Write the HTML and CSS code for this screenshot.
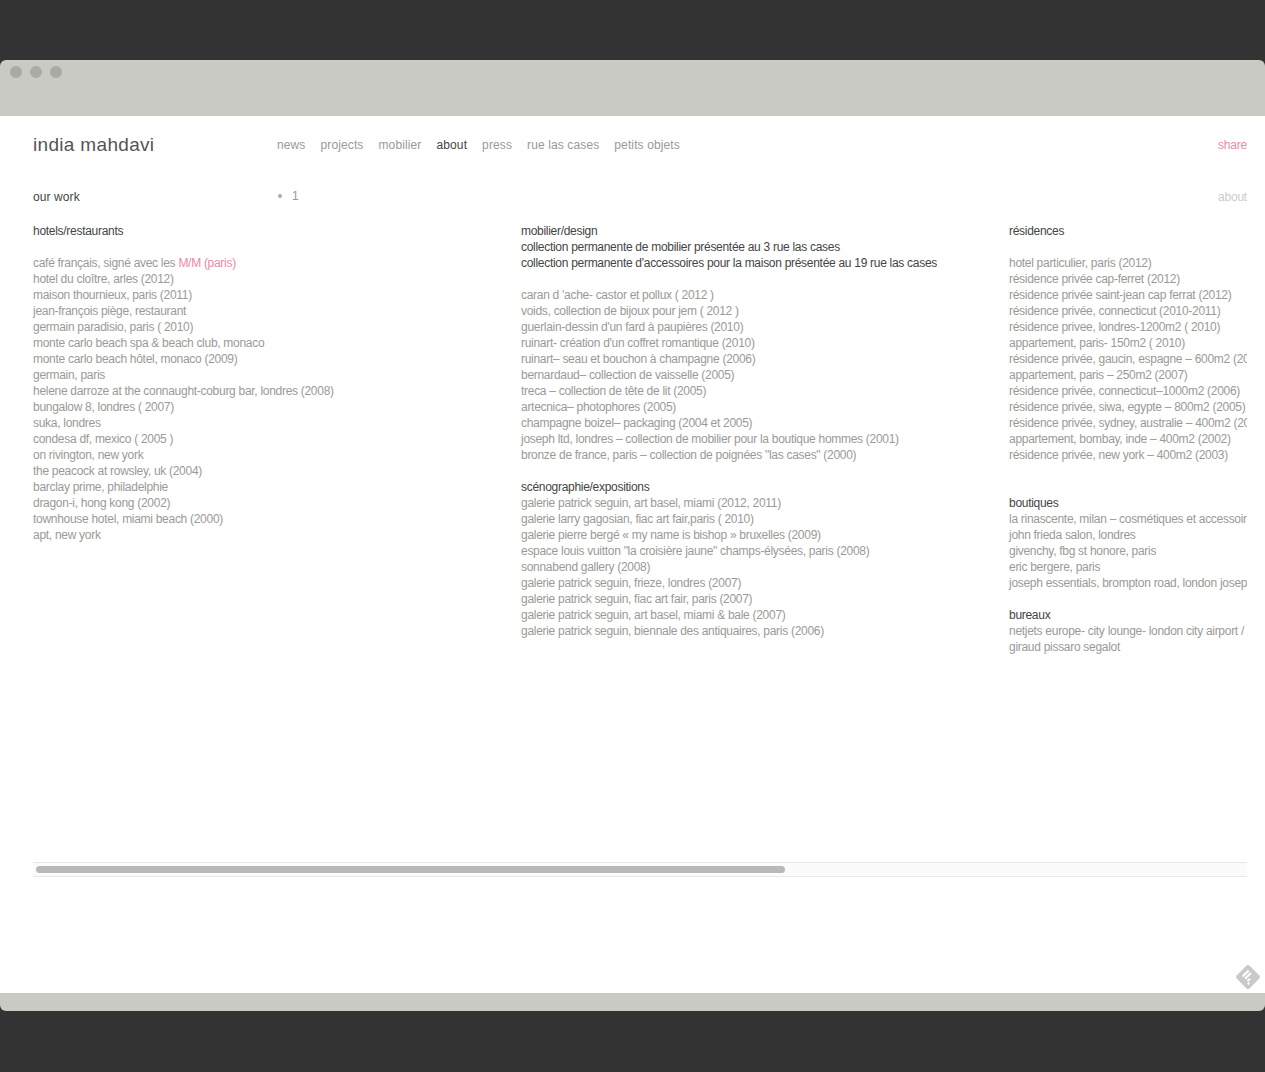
FILE: index.html
```html
<!DOCTYPE html>
<html lang="en">
<head>
    <meta charset="UTF-8">
    <title>india mahdavi</title>
    <link rel="stylesheet" href="styles.css">
</head>
<body>
    <div class="window">
        <div class="titlebar">
            <span class="dot"></span>
            <span class="dot"></span>
            <span class="dot"></span>
        </div>
        <div class="page">
            <header class="top">
                <a class="logo">india mahdavi</a>
                <nav class="nav">
                    <a>news</a>
                    <a>projects</a>
                    <a>mobilier</a>
                    <a class="current">about</a>
                    <a>press</a>
                    <a>rue las cases</a>
                    <a>petits objets</a>
                </nav>
                <a class="share">share</a>
            </header>
            <div class="sub">
                <div class="sub-title">our work</div>
                <ul class="pager"><li>1</li></ul>
                <a class="sub-about">about</a>
            </div>
            <div class="scroller">
                <div class="columns">
                    <div class="col">
                        <h3>hotels/restaurants</h3>
                        <ul class="gap">
                            <li>café français, signé avec les <a class="pink">M/M (paris)</a></li>
                            <li>hotel du cloître, arles (2012)</li>
                            <li>maison thournieux, paris (2011)</li>
                            <li>jean-françois piège, restaurant</li>
                            <li>germain paradisio, paris ( 2010)</li>
                            <li>monte carlo beach spa &amp; beach club, monaco</li>
                            <li>monte carlo beach hôtel, monaco (2009)</li>
                            <li>germain, paris</li>
                            <li>helene darroze at the connaught-coburg bar, londres (2008)</li>
                            <li>bungalow 8, londres ( 2007)</li>
                            <li>suka, londres</li>
                            <li>condesa df, mexico ( 2005 )</li>
                            <li>on rivington, new york</li>
                            <li>the peacock at rowsley, uk (2004)</li>
                            <li>barclay prime, philadelphie</li>
                            <li>dragon-i, hong kong (2002)</li>
                            <li>townhouse hotel, miami beach (2000)</li>
                            <li>apt, new york</li>
                        </ul>
                    </div>
                    <div class="col">
                        <h3>mobilier/design</h3>
                        <h3>collection permanente de mobilier présentée au 3 rue las cases</h3>
                        <h3>collection permanente d'accessoires pour la maison présentée au 19 rue las cases</h3>
                        <ul class="gap">
                            <li>caran d 'ache- castor et pollux ( 2012 )</li>
                            <li>voids, collection de bijoux pour jem ( 2012 )</li>
                            <li>guerlain-dessin d'un fard à paupières (2010)</li>
                            <li>ruinart- création d'un coffret romantique (2010)</li>
                            <li>ruinart– seau et bouchon à champagne (2006)</li>
                            <li>bernardaud– collection de vaisselle (2005)</li>
                            <li>treca – collection de tête de lit (2005)</li>
                            <li>artecnica– photophores (2005)</li>
                            <li>champagne boizel– packaging (2004 et 2005)</li>
                            <li>joseph ltd, londres – collection de mobilier pour la boutique hommes (2001)</li>
                            <li>bronze de france, paris – collection de poignées "las cases" (2000)</li>
                        </ul>
                        <h3 class="gap">scénographie/expositions</h3>
                        <ul>
                            <li>galerie patrick seguin, art basel, miami (2012, 2011)</li>
                            <li>galerie larry gagosian, fiac art fair,paris ( 2010)</li>
                            <li>galerie pierre bergé « my name is bishop » bruxelles (2009)</li>
                            <li>espace louis vuitton "la croisière jaune" champs-élysées, paris (2008)</li>
                            <li>sonnabend gallery (2008)</li>
                            <li>galerie patrick seguin, frieze, londres (2007)</li>
                            <li>galerie patrick seguin, fiac art fair, paris (2007)</li>
                            <li>galerie patrick seguin, art basel, miami &amp; bale (2007)</li>
                            <li>galerie patrick seguin, biennale des antiquaires, paris (2006)</li>
                        </ul>
                    </div>
                    <div class="col">
                        <h3>résidences</h3>
                        <ul class="gap">
                            <li>hotel particulier, paris (2012)</li>
                            <li>résidence privée cap-ferret (2012)</li>
                            <li>résidence privée saint-jean cap ferrat (2012)</li>
                            <li>résidence privée, connecticut (2010-2011)</li>
                            <li>résidence privee, londres-1200m2 ( 2010)</li>
                            <li>appartement, paris- 150m2 ( 2010)</li>
                            <li>résidence privée, gaucin, espagne – 600m2 (2008)</li>
                            <li>appartement, paris – 250m2 (2007)</li>
                            <li>résidence privée, connecticut–1000m2 (2006)</li>
                            <li>résidence privée, siwa, egypte – 800m2 (2005)</li>
                            <li>résidence privée, sydney, australie – 400m2 (2004)</li>
                            <li>appartement, bombay, inde – 400m2 (2002)</li>
                            <li>résidence privée, new york – 400m2 (2003)</li>
                        </ul>
                        <h3 class="gap-double">boutiques</h3>
                        <ul>
                            <li>la rinascente, milan – cosmétiques et accessoires</li>
                            <li>john frieda salon, londres</li>
                            <li>givenchy, fbg st honore, paris</li>
                            <li>eric bergere, paris</li>
                            <li>joseph essentials, brompton road, london joseph</li>
                        </ul>
                        <h3 class="gap">bureaux</h3>
                        <ul>
                            <li>netjets europe- city lounge- london city airport / paris</li>
                            <li>giraud pissaro segalot</li>
                        </ul>
                    </div>
                </div>
                <div class="scrollbar"><div class="thumb"></div></div>
            </div>
            <svg class="feed-icon" viewBox="0 0 24 24" width="26" height="26">
                <rect x="3.6" y="3.6" width="16.8" height="16.8" rx="2.2" transform="rotate(45 12 12)" fill="#c9c9c9"/>
                <path d="M7 11.6 L12.6 6 M9.3 13.7 L14.8 8.2 M11.6 15.8 L13.8 13.6" stroke="#fff" stroke-width="1.9" fill="none"/>
                <circle cx="12.6" cy="18" r="1.1" fill="#fff"/>
            </svg>
        </div>
        <div class="bottombar"></div>
    </div>
</body>
</html>
```

FILE: styles.css
```css
* {margin: 0; padding: 0; box-sizing: border-box;}
body {background: #333; font-family: "Liberation Sans", Arial, sans-serif; font-size: 12px; line-height: 16px; color: #9a9a96; padding-top: 60px; padding-bottom: 61px;}
ul {list-style: none;}

.window {border-radius: 6px; overflow: hidden;}
.titlebar {height: 56px; background: #c9cac4; display: flex; gap: 8px; padding: 6px 0 0 10px;}
.dot {width: 12px; height: 12px; border-radius: 50%; background: #a9aba6;}
.bottombar {height: 18px; background: #c9cac4;}

.page {position: relative; height: 877px; background: #fff; padding: 0 18px 0 33px;}

.top {display: flex; align-items: center; height: 58px;}
.logo {width: 244px; font-size: 19px; letter-spacing: 0.32px; color: #555;}
.nav {display: flex; gap: 15px; flex: 1; letter-spacing: 0.12px;}
.nav a.current {color: #444;}
.share {color: #ec8aa2; letter-spacing: -0.2px;}
.pink {color: #ec8aa2;}

.sub {display: flex; height: 49px; padding-top: 15px;}
.sub-title {width: 244px; color: #444; letter-spacing: 0.1px;}
.pager {flex: 1; margin-top: -1px;}
.pager li {display: flex; align-items: center; gap: 10px; padding-left: 1px;}
.pager li::before {content: ""; width: 4px; height: 4px; border-radius: 50%; background: #aaa;}
.sub-about {color: #ccc; letter-spacing: -0.2px;}

.scroller {overflow: hidden;}
.columns {display: flex; height: 639px; overflow: hidden; letter-spacing: -0.29px;}
.col {flex: 0 0 488px; white-space: nowrap;}
.col h3 {font-size: 12px; font-weight: normal; color: #444;}
.gap {margin-top: 16px;}
.gap-double {margin-top: 32px;}

.scrollbar {height: 15px; border-top: 1px solid #e8e8e8; border-bottom: 1px solid #e8e8e8; background: #fbfbfb; padding: 3px;}
.thumb {width: 749px; height: 7px; border-radius: 4px; background: #b9b9b9;}

.feed-icon {position: absolute; right: 4px; top: 848px;}
```
